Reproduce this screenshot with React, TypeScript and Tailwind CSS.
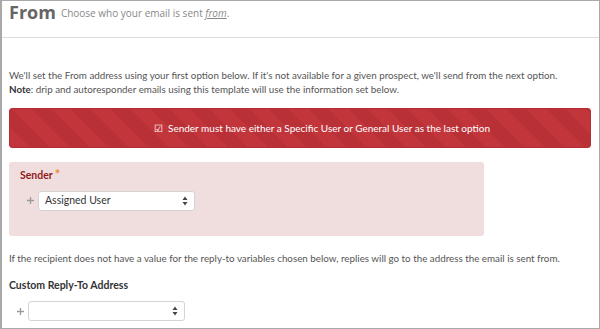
import React from 'react';

function Spinner() {
  return (
    <svg width="6" height="10" viewBox="0 0 6 10" className="text-[#444]">
      <path d="M3 0.5 L5.5 4 H0.5 Z" fill="currentColor" />
      <path d="M3 9.5 L5.5 6 H0.5 Z" fill="currentColor" />
    </svg>
  );
}

function SelectBox({ value, width }: { value?: string; width: string }) {
  return (
    <div
      className={`${width} h-[20px] bg-white rounded-[3px] border border-[#d4d4d4] flex items-center justify-between pl-[6px] pr-[6px] text-[10.5px] text-[#333]`}
    >
      <span>{value}</span>
      <Spinner />
    </div>
  );
}

function Plus() {
  return (
    <svg width="7" height="7" viewBox="0 0 7 7" className="text-[#9a9a9a]">
      <path d="M3.5 0 V7 M0 3.5 H7" stroke="currentColor" strokeWidth="1.3" />
    </svg>
  );
}

export default function App() {
  return (
    <div
      className="w-[600px] h-[329px] bg-white border border-[#a9a9a9] border-l-2 overflow-hidden text-[#555]"
      style={{ fontFamily: 'Lato, "Open Sans", sans-serif' }}
    >
      {/* Header */}
      <div className="h-[37px] border-b border-[#dcdcdc] px-[7px] flex items-start pt-[1px] gap-[5px]">
        <h1 className="text-[18px] font-bold text-[#666] leading-[20px]" style={{ fontFamily: '"Open Sans", sans-serif' }}>
          From
        </h1>
        <p className="text-[10px] text-[#888] mt-[5px] leading-[12px]" style={{ fontFamily: '"Open Sans", sans-serif' }}>
          Choose who your email is sent <em className="underline">from</em>.
        </p>
      </div>

      <div className="px-[7px] pr-[8px]">
        <p className="mt-[30px] text-[9.8px] leading-[14px] text-[#555]">
          We'll set the From address using your first option below. If it's not available for a given prospect, we'll send from the next option.
          <br />
          <span className="font-bold text-[#333]">Note</span>: drip and autoresponder emails using this template will use the information set below.
        </p>

        {/* Error banner */}
        <div className="mt-[12px] h-[40px] rounded-[3px] border border-[#b32d33] flex items-center justify-center pl-[44px] text-white text-[10px] bg-[repeating-linear-gradient(45deg,#c1353b_0px,#c1353b_14px,#b93137_14px,#b93137_28px)]">
          <span className="mr-[5px] text-[10px]">☑</span>
          Sender must have either a Specific User or General User as the last option
        </div>

        {/* Sender */}
        <div className="mt-[14px] w-[475px] h-[74px] rounded-[3px] bg-[#f0dede] px-[11px] pt-[6px]">
          <div className="flex items-start gap-[2px]">
            <span className="text-[10.5px] font-bold text-[#8e1c1c]">Sender</span>
            <span className="text-[13px] leading-[12px] text-[#f0872c] font-bold">*</span>
          </div>
          <div className="mt-[7px] flex items-center gap-[4px] pl-[7px]">
            <Plus />
            <SelectBox value="Assigned User" width="w-[157px]" />
          </div>
        </div>

        <p className="mt-[15px] text-[9.8px] leading-[14px] text-[#555]">
          If the recipient does not have a value for the reply-to variables chosen below, replies will go to the address the email is sent from.
        </p>

        <p className="mt-[13px] text-[10.5px] font-bold text-[#333] leading-[14px]">Custom Reply-To Address</p>

        <div className="mt-[9px] flex items-center gap-[4px] pl-[8px]">
          <Plus />
          <SelectBox width="w-[157px]" />
        </div>
      </div>
    </div>
  );
}
